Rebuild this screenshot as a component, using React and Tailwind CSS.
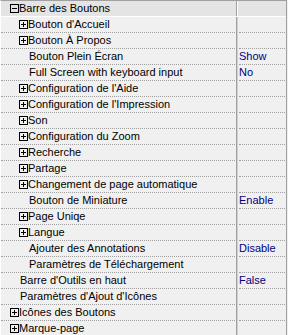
import React from "react";

const rows = [
  { level: 0, exp: "minus", name: "Barre des Boutons", header: true },
  { level: 1, exp: "plus", name: "Bouton d'Accueil" },
  { level: 1, exp: "plus", name: "Bouton À Propos" },
  { level: 1, name: "Bouton Plein Écran", value: "Show" },
  { level: 1, name: "Full Screen with keyboard input", value: "No" },
  { level: 1, exp: "plus", name: "Configuration de l'Aide" },
  { level: 1, exp: "plus", name: "Configuration de l'Impression" },
  { level: 1, exp: "plus", name: "Son" },
  { level: 1, exp: "plus", name: "Configuration du Zoom" },
  { level: 1, exp: "plus", name: "Recherche" },
  { level: 1, exp: "plus", name: "Partage" },
  { level: 1, exp: "plus", name: "Changement de page automatique" },
  { level: 1, name: "Bouton de Miniature", value: "Enable" },
  { level: 1, exp: "plus", name: "Page Uniqe" },
  { level: 1, exp: "plus", name: "Langue" },
  { level: 1, name: "Ajouter des Annotations", value: "Disable" },
  { level: 1, name: "Paramètres de Téléchargement" },
  { level: 0, name: "Barre d'Outils en haut", value: "False" },
  { level: 0, name: "Paramètres d'Ajout d'Icônes" },
  { level: 0, exp: "plus", name: "Icônes des Boutons" },
  { level: 0, exp: "plus", name: "Marque-page" },
];

function Expander({ plus }) {
  return (
    <svg width="9" height="9" viewBox="0 0 9 9" className="shrink-0 block" shapeRendering="crispEdges">
      <rect x="0.5" y="0.5" width="8" height="8" fill="none" stroke="#000" />
      <path d="M2 4.5h5" stroke="#000" />
      {plus && <path d="M4.5 2v5" stroke="#000" />}
    </svg>
  );
}

function Row({ row }) {
  const pad = row.level === 0 ? "pl-[9px]" : "pl-[18px]";
  if (row.header) {
    return (
      <div className="flex h-[16px] bg-[#e4e4e4] border-b border-white">
        <div className={`w-[234px] h-full flex items-center ${pad}`}>
          <Expander plus={false} />
          <span className="whitespace-nowrap">{row.name}</span>
        </div>
        <div className="w-px" />
        <div className="w-px bg-[#a0a0a0]" />
        <div className="w-px bg-white" />
        <div className="w-px" />
        <div className="w-[46px]" />
        <div className="w-px" />
      </div>
    );
  }
  return (
    <div className="flex h-[16px]">
      <div className={`w-[234px] h-full flex items-center border-b border-dotted border-[#a0a0a0] overflow-hidden ${pad}`}>
        {row.exp ? <Expander plus={row.exp === "plus"} /> : <div className="w-[10px] shrink-0" />}
        <span className="whitespace-nowrap">{row.name}</span>
      </div>
      <div className="w-px" />
      <div className="w-px bg-[#a0a0a0]" />
      <div className="w-px bg-[#d0d0d0]" />
      <div className="w-px" />
      <div className="w-[46px] h-full flex items-center border-b border-dotted border-[#a0a0a0] overflow-hidden">
        <span className="whitespace-nowrap text-[#000080]">{row.value || ""}</span>
      </div>
      <div className="w-px" />
    </div>
  );
}

export default function App() {
  return (
    <div className="w-[288px] h-[335px] overflow-hidden bg-[#f0f0f0] font-['Liberation_Sans',Arial,sans-serif] text-[11px] leading-[15px] text-black">
      <div className="flex">
        <div className="flex-1 border-t border-l border-t-[#a0a0a0] border-l-white border-r border-r-[#a0a0a0]">
          {rows.map((r, i) => (
            <Row key={i} row={r} />
          ))}
        </div>
        <div className="w-px bg-[#f0f0f0]" />
      </div>
    </div>
  );
}
